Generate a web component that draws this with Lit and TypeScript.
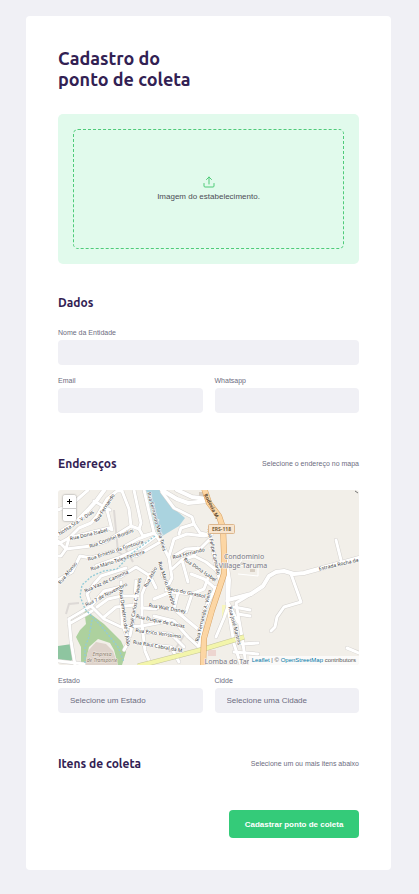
import { LitElement, html, css, svg } from "lit";
import { customElement } from "lit/decorators.js";

const minorRoads = [
  "M11 48L21 38L33 33L39 26L49 9L59 1L64 1L71 19L73 36",
  "M76 0L83 33L81 39",
  "M64 1L60 -2",
  "M48 16L54 40L51 38L11 48L0 54",
  "M36 11L52 20",
  "M0 20L14 14L30 0",
  "M0 51L8 59L33 56L49 51L73 36L81 39L85 46L96 43",
  "M33 68L60 60L80 49L96 43",
  "M8 59L3 66L0 66M8 59L11 48",
  "M38 76L60 68L82 58L98 46",
  "M0 90L14 82L22 66L33 68",
  "M86 0L96 43L103 52L111 68L114 88L108 100",
  "M78 66L104 51",
  "M62 87L78 77L92 86L98 98",
  "M104 2L116 18L134 27L136 34L123 38L121 44",
  "M136 34L142 43L152 45",
  "M111 66L116 49L129 44L146 46L154 44",
  "M116 66L128 59L143 58L151 50",
  "M114 79L124 70L136 66L148 72L158 80",
  "M151 43L155 60L158 79L162 90",
  "M124 70L130 92M136 66L140 58",
  "M283 70L278 50",
  "M233 84L243 112L226 117L219 127L217 137L213 141",
  "M289 158L301 163",
  "M169 84L169 111L176 154L183 175",
  "M193 104L178 113L184 147L188 175",
  "M176 117L192 120M180 124L192 126M169 111L180 132",
  "M176 162L200 164M184 154L200 153",
  "M158 97L146 121L141 157",
  "M133 84L146 89L158 99",
  "M96 109L113 102L134 104L146 99L150 88",
  "M96 117L116 119L130 131L141 140",
  "M96 126L116 131L130 147L141 157",
  "M84 142L113 144L126 157",
  "M84 154L113 157L121 172",
  "M134 104L128 122M120 103L116 119M113 102L104 84",
  "M11 129L33 116L29 104L36 94L43 86L68 78",
  "M33 116L46 129L63 137L84 136L110 131",
  "M11 134L34 121M11 129L13 151L17 175",
  "M33 116L46 101L63 97",
  "M39 117L50 109L64 106L80 106",
  "M46 127L58 117L77 115",
  "M63 92L64 134L71 151L66 160",
  "M78 91L76 126L72 146",
  "M92 84L84 104L84 134L87 161L93 175",
  "M84 118L98 119",
  "M0 171L26 174",
  "M158 147L166 128L170 116",
];

const majorRoads = [
  "M0 44L18 32L30 20L39 10L47 -1",
  "M104 0L119 9L130 13L150 11",
  "M119 0L134 7L148 9",
  "M168 70L171 90L170 110L193 104L205 96L211 86L218 82L226 81L236 84L246 83L301 68",
];

const streetNames: Array<[string, number, number, number]> = [
  ["Nossa Sra. V. Dias", 19, 34, -33],
  ["Rua Fernando", 48, 19, -57],
  ["Rua Dona Isabel", 31, 46, -13],
  ["Rua Coronel Bordini", 54, 50, -20],
  ["Rua Ernesto da Fontoura", 58, 62, -18],
  ["Rua Mário Teles Ferreira", 60, 72, -18],
  ["Rua Fernando Maria Teles", 97, 32, 75],
  ["Rua Fernando", 131, 65, -14],
  ["Rua Dona Isabel", 141, 81, 34],
  ["Rua Felipe Camarão", 154, 62, 78],
  ["Rua Vaz de Caminha", 49, 93, -24],
  ["Rua 7 de Novembro", 49, 106, -27],
  ["Rua Demétrio de S. João", 65, 128, 82],
  ["José Carlos C. Tavares", 79, 113, -80],
  ["Rua Afonso", 11, 84, -51],
  ["Rua Atílio", 94, 88, -62],
  ["Rua Mario R. Trebbi", 107, 94, 72],
  ["Beco do Girassol", 128, 104, 12],
  ["Rua Walt Disney", 109, 120, 10],
  ["Rua Duque de Caxias", 102, 133, 12],
  ["Rua Erico Verissimo", 100, 145, 8],
  ["Rua Raul Cabral da M.", 100, 158, 10],
  ["Rua Fernando A. Vieira", 147, 126, -76],
  ["Rua José Martins", 175, 136, 76],
  ["Estrada Rocha da", 281, 76, -13],
];

@customElement("street-map")
export class StreetMap extends LitElement {
  static styles = css`
    :host { display: block; position: relative; height: 175px; border-radius: 3px; overflow: hidden; background: #f2efe9; font-family: "Liberation Sans", Arial, sans-serif; }
    .canvas { display: block; width: 100%; height: 100%; }
    .casing, .road { fill: none; stroke-linejoin: round; stroke-linecap: round; }
    .casing { stroke: #d5d2cf; stroke-width: 4; }
    .casing.major { stroke-width: 5; }
    .road { stroke: #fff; stroke-width: 3; }
    .road.major { stroke-width: 4; }
    .name { font: 5px "Noto Sans", sans-serif; fill: #333; text-anchor: middle; paint-order: stroke; stroke: #fff; stroke-width: 1px; }
    .place { font: 7px "Noto Sans", sans-serif; fill: #777784; text-anchor: middle; paint-order: stroke; stroke: #f7f5f1; stroke-width: 1px; }
    .company { font: italic 5px "Noto Sans", sans-serif; fill: #8a7c6c; text-anchor: middle; paint-order: stroke; stroke: #eee6df; stroke-width: 1px; }
    .shield { font: bold 5px "Noto Sans", sans-serif; fill: #7c6238; text-anchor: middle; }
    .highway { font: bold 5px "Noto Sans", sans-serif; fill: #5a4630; text-anchor: middle; }
    .zoom { position: absolute; top: 5px; left: 5px; display: grid; width: 13px; border-radius: 2px; overflow: hidden; box-shadow: 0 0 2px #777; }
    .step { height: 13px; margin: 0; padding: 0; border: 0; background: #fff; color: #000; display: grid; place-items: center; }
    .step + .step { border-top: 1px solid #ccc; }
    .sign { width: 5px; height: 5px; stroke: #000; stroke-width: 1; }
    .credits { position: absolute; right: 0; bottom: 0; padding: 0 3px; background: #ffffffb3; color: #555; font-size: 6px; line-height: 9px; white-space: nowrap; }
    .credits a { color: #0078a8; text-decoration: none; }
  `;

  render() {
    return html`
      <svg class="canvas" viewBox="0 0 301 175" preserveAspectRatio="xMidYMid slice" role="img" aria-label="Mapa">
        <path fill="#aad3df" d="M88 0H102L113 16L127 28L121 36L101 48L97 36Z" />
        <path fill="#add19e" d="M26 119L46 134L63 151L68 162L64 175H60L56 160L52 153L40 149L31 157L27 175H23V157L18 147L22 140L28 134Z" />
        <path fill="#8ec5a0" d="M0 156L14 154L17 165L13 171L0 170Z" />
        <path fill="#ded3cb" d="M27 175L30 161L38 152L48 154L55 161L60 175Z" />
        <path fill="#f7f6bc" d="M164 115h4v13h-4z" />
        <path fill="#edd5d0" d="M150 160h8v6h-8z" />
        <path fill="#d6cdc2" d="M141 2h5v4h-5z M182 72h4v3h-4z M192 79h5v3h-5z M109 158l5-2 2 4-5 2z" />
        <path fill="none" stroke="#ddd9d6" stroke-width="2" d="M56 20L60 62L70 68M8 124L11 114L21 113M66 56L75 72M118 158L128 142" />
        <path fill="none" stroke="#fff" stroke-width="1" d="M180 84L200 86L200 78L181 75L184 69L196 70" />
        ${minorRoads.map((d) => svg`<path class="casing" d=${d} />`)}
        ${majorRoads.map((d) => svg`<path class="casing major" d=${d} />`)}
        ${minorRoads.map((d) => svg`<path class="road" d=${d} />`)}
        ${majorRoads.map((d) => svg`<path class="road major" d=${d} />`)}
        <path fill="none" stroke="#92cbd8" stroke-width="1.3" stroke-dasharray="2 1.5" d="M97 46L73 64L59 79L46 81L34 86L24 95L22 106L27 119L44 137L60 157L66 172M34 130L31 147L27 157V173" />
        <path fill="none" stroke="#c5c59a" stroke-width="5" d="M80 176L96 172L146 159L186 147" />
        <path fill="none" stroke="#f3f5ab" stroke-width="4" d="M80 176L96 172L146 159L186 147" />
        <path fill="none" stroke="#d6a266" stroke-width="6" stroke-linejoin="round" d="M146 -2L151 13L161 26L165 38L166 63L166 84L154 120L146 148L145 177" />
        <path fill="none" stroke="#fcd6a4" stroke-width="5" stroke-linejoin="round" d="M146 -2L151 13L161 26L165 38L166 63L166 84L154 120L146 148L145 177" />
        <text class="highway" transform="translate(152 17) rotate(63)">Rodovia M.</text>
        ${streetNames.map(([name, x, y, angle]) => svg`<text class="name" transform="translate(${x} ${y}) rotate(${angle})">${name}</text>`)}
        <rect x="150.500" y="34.500" width="26" height="9" rx="1" fill="#f8e5cf" stroke="#dcb78e" />
        <text class="shield" x="163.500" y="41">ERS-118</text>
        <text class="place" x="186" y="69">Condomínio</text>
        <text class="place" x="185" y="78">Village Taruma</text>
        <text class="place" x="169" y="174">Lomba do Tar</text>
        <text class="company" x="44" y="166">Empresa</text>
        <text class="company" x="44" y="172">de Transporte</text>
        <path fill="none" stroke="#777" d="M297 1l3 2" />
      </svg>
      <div class="zoom">
        <button class="step" type="button" aria-label="Aproximar"><svg class="sign" viewBox="0 0 5 5"><path d="M0 2.500H5M2.500 0V5" /></svg></button>
        <button class="step" type="button" aria-label="Afastar"><svg class="sign" viewBox="0 0 5 5"><path d="M0 2.500H5" /></svg></button>
      </div>
      <div class="credits"><a href="#leaflet">Leaflet</a> | © <a href="#osm">OpenStreetMap</a> contributors</div>
    `;
  }
}

@customElement("app-root")
export class AppRoot extends LitElement {
  static styles = css`
    :host { display: block; box-sizing: border-box; min-height: 100vh; padding: 16px 28px 24px 26px; background: #f0f0f5; color: #6c6c80; font-family: "Liberation Sans", Arial, sans-serif; }
    * { box-sizing: border-box; }
    .card { display: flex; flex-direction: column; max-width: 365px; margin: 0 auto; padding: 32px; border-radius: 4px; background: #fff; }
    .title, .heading { margin: 0; color: #322153; font-family: Ubuntu, "Noto Sans", sans-serif; font-weight: 700; }
    .title { margin-bottom: 24px; font-size: 18px; line-height: 21px; }
    .drop { display: flex; height: 150px; padding: 15px; border-radius: 5px; background: #e1faec; cursor: pointer; }
    .frame { flex: 1; display: flex; flex-direction: column; align-items: center; justify-content: center; gap: 4px; border: 1px dashed #4ecb79; border-radius: 5px; color: #4c4c55; font-size: 8px; line-height: 10px; }
    .file { position: absolute; width: 1px; height: 1px; opacity: 0; }
    .upload { width: 12px; height: 12px; fill: none; stroke: #4ecb79; stroke-width: 2; stroke-linecap: round; stroke-linejoin: round; }
    .section { margin: 44px 0 0; padding: 0; }
    .section.first { margin-top: 32px; }
    .head { display: flex; justify-content: space-between; align-items: center; height: 14px; }
    .head.form { margin-bottom: 17px; }
    .head.wide { margin-bottom: 19px; }
    .heading { font-size: 12px; line-height: 14px; }
    .hint { font-size: 7px; line-height: 12px; }
    .fields { display: grid; grid-template-columns: 1fr 1fr; gap: 10px 12px; }
    .fields.below { margin-top: 10px; }
    .field { display: flex; flex-direction: column; gap: 1px; min-width: 0; }
    .field.full { grid-column: 1 / -1; }
    .label { font-size: 7px; line-height: 12px; }
    .control { appearance: none; width: 100%; height: 25px; margin: 0; padding: 0 12px; border: 0; border-radius: 4px; background: #f0f0f5; color: #6c6c80; font: 8px "Liberation Sans", Arial, sans-serif; }
    .submit { align-self: flex-end; width: 130px; height: 28px; margin-top: 39px; padding: 0; border: 0; border-radius: 4px; background: #34cb79; color: #fff; font: bold 8px "Liberation Sans", Arial, sans-serif; cursor: pointer; }
  `;

  private field(id: string, label: string, full = false) {
    return html`<div class="field ${full ? "full" : ""}"><label class="label" for=${id}>${label}</label><input class="control" id=${id} name=${id} /></div>`;
  }

  private choice(id: string, label: string, prompt: string) {
    return html`<div class="field"><label class="label" for=${id}>${label}</label><select class="control" id=${id} name=${id}><option>${prompt}</option></select></div>`;
  }

  render() {
    return html`
      <form class="card">
        <h1 class="title">Cadastro do<br />ponto de coleta</h1>
        <label class="drop">
          <input class="file" type="file" accept="image/*" />
          <span class="frame">
            <svg class="upload" viewBox="0 0 24 24"><path d="M2 15v5a2 2 0 0 0 2 2h16a2 2 0 0 0 2-2v-5M7 7l5-5 5 5M12 2v14" /></svg>
            Imagem do estabelecimento.
          </span>
        </label>
        <section class="section first">
          <div class="head form"><h2 class="heading">Dados</h2></div>
          <div class="fields">
            ${this.field("name", "Nome da Entidade", true)}
            ${this.field("email", "Email")}
            ${this.field("whatsapp", "Whatsapp")}
          </div>
        </section>
        <section class="section">
          <div class="head wide"><h2 class="heading">Endereços</h2><span class="hint">Selecione o endereço no mapa</span></div>
          <street-map></street-map>
          <div class="fields below">
            ${this.choice("uf", "Estado", "Selecione um Estado")}
            ${this.choice("city", "Cidde", "Selecione uma Cidade")}
          </div>
        </section>
        <section class="section">
          <div class="head"><h2 class="heading">Itens de coleta</h2><span class="hint">Selecione um ou mais itens abaixo</span></div>
        </section>
        <button class="submit" type="submit">Cadastrar ponto de coleta</button>
      </form>
    `;
  }
}
